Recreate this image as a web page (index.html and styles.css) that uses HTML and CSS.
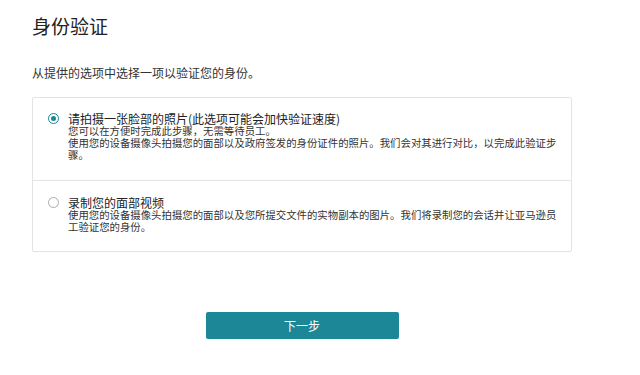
FILE: index.html
```html
<!DOCTYPE html>
<html lang="zh-CN">
<head>
    <meta charset="UTF-8">
    <meta name="viewport" content="width=device-width, initial-scale=1.0">
    <title>身份验证</title>
    <link rel="stylesheet" href="styles.css">
</head>
<body>
    <div class="container">
        <h1>身份验证</h1>
        <p class="intro">从提供的选项中选择一项以验证您的身份。</p>

        <div class="options">
            <label class="option">
                <span class="radio checked"></span>
                <span class="option-text">
                    <span class="option-title">请拍摄一张脸部的照片(此选项可能会加快验证速度)</span>
                    <span class="option-desc">您可以在方便时完成此步骤，无需等待员工。</span>
                    <span class="option-desc">使用您的设备摄像头拍摄您的面部以及政府签发的身份证件的照片。我们会对其进行对比，以完成此验证步骤。</span>
                </span>
            </label>
            <label class="option">
                <span class="radio"></span>
                <span class="option-text">
                    <span class="option-title">录制您的面部视频</span>
                    <span class="option-desc">使用您的设备摄像头拍摄您的面部以及您所提交文件的实物副本的图片。我们将录制您的会话并让亚马逊员工验证您的身份。</span>
                </span>
            </label>
        </div>

        <div class="actions">
            <button type="button">下一步</button>
        </div>
    </div>
</body>
</html>
```

FILE: styles.css
```css
body {
    margin: 0;
    padding: 0;
    font-family: "Noto Sans CJK SC", "Noto Sans", sans-serif;
    background-color: white;
    color: #333;
}
.container {
    width: 540px;
    padding: 0 32px;
}
h1 {
    font-size: 19px;
    font-weight: normal;
    line-height: 24px;
    color: #222;
    margin: 14px 0 0;
}
.intro {
    font-size: 12px;
    line-height: 16px;
    margin: 27px 0 0;
}
.options {
    margin-top: 16px;
    border: 1px solid #e3e3e3;
    border-radius: 2px;
}
.option {
    display: flex;
    align-items: flex-start;
    gap: 9px;
    padding: 14px 12px 19px 15px;
    cursor: pointer;
}
.option + .option {
    border-top: 1px solid #e3e3e3;
    padding-top: 15px;
    padding-bottom: 18px;
}
.radio {
    flex: none;
    width: 11px;
    height: 11px;
    margin-top: 1px;
    border: 1px solid #aaa;
    border-radius: 50%;
    box-sizing: border-box;
    position: relative;
}
.radio.checked {
    border-color: #1b8797;
}
.radio.checked::after {
    content: "";
    position: absolute;
    top: 2px;
    left: 2px;
    width: 5px;
    height: 5px;
    border-radius: 50%;
    background-color: #1b8797;
}
.option-text {
    display: flex;
    flex-direction: column;
    width: 494px;
}
.option-title {
    font-size: 12px;
    line-height: 13px;
    color: #222;
    margin-bottom: 0;
}
.option-desc {
    font-size: 10.4px;
    line-height: 12px;
    color: #333;
}
.actions {
    display: flex;
    justify-content: center;
    margin-top: 60px;
}
button {
    width: 193px;
    height: 27px;
    background-color: #1b8797;
    color: white;
    border: none;
    border-radius: 2px;
    font-family: inherit;
    font-size: 12px;
    cursor: pointer;
}
button:hover {
    background-color: #146c79;
}
```
